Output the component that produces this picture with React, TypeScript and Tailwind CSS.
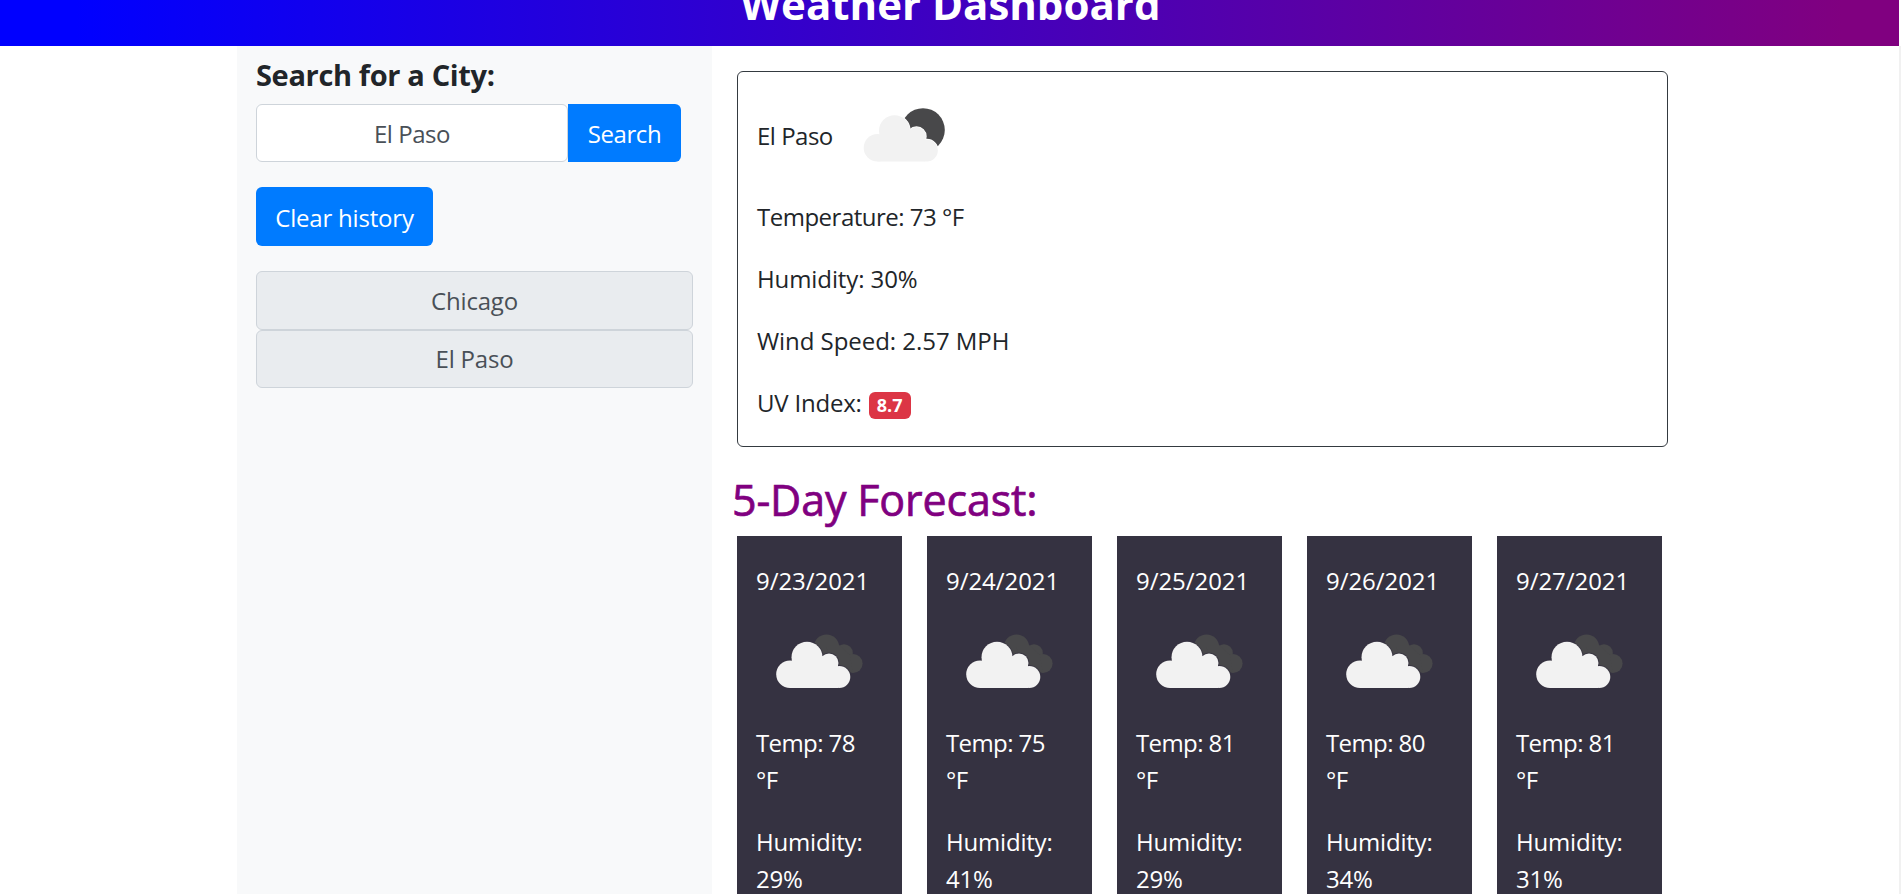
const history = ["Chicago", "El Paso"];

const forecast = [
  { date: "9/23/2021", temp: 78, humidity: 29 },
  { date: "9/24/2021", temp: 75, humidity: 41 },
  { date: "9/25/2021", temp: 81, humidity: 29 },
  { date: "9/26/2021", temp: 80, humidity: 34 },
  { date: "9/27/2021", temp: 81, humidity: 31 },
];

function CloudShape() {
  return (
    <>
      <circle cx="14" cy="32.7" r="13.8" />
      <circle cx="31" cy="15.8" r="15.5" />
      <circle cx="53" cy="21.5" r="9.5" />
      <circle cx="63.3" cy="35.5" r="11" />
      <path d="M14 46.5V30L20 14H45L62 24V46.5Z" />
    </>
  );
}

function NightCloud() {
  return (
    <svg className="ml-[31px] block h-[55px] w-[83px] shrink-0" viewBox="0 0 83 55">
      <circle cx="60" cy="22" r="21.8" fill="#48484a" />
      <g transform="translate(0.5 7)">
        <g fill="#fff" stroke="#fff" strokeWidth="1.4">
          <CloudShape />
        </g>
        <g fill="#f2f2f2">
          <CloudShape />
        </g>
      </g>
    </svg>
  );
}

function BrokenClouds() {
  return (
    <svg className="ml-5 block h-[56px] w-[87px] overflow-visible" viewBox="0 0 87 56">
      <g fill="#48484a">
        <circle cx="50.5" cy="14" r="12.6" />
        <circle cx="68" cy="20" r="8.8" />
        <circle cx="77" cy="30.5" r="9.6" />
        <path d="M50 14L62 11L74 22L77 40L56 30Z" />
      </g>
      <g transform="translate(0 8.5)">
        <g stroke="#343140" strokeOpacity="0.7" strokeWidth="2">
          <CloudShape />
        </g>
        <g fill="#f2f2f2">
          <CloudShape />
        </g>
      </g>
    </svg>
  );
}

export default function App() {
  return (
    <div className="flex h-[894px] flex-col overflow-hidden bg-white font-['Open_Sans','Noto_Sans',sans-serif] text-[24px] leading-[37px] tracking-[-0.2px] text-[#212529]">
      <header className="mr-[2px] flex h-[46px] shrink-0 items-end justify-center overflow-hidden bg-[linear-gradient(90deg,#0000ff_4%,#800080_97%)] pb-[14px]">
        <h1 className="mr-[-2px] text-[42px] leading-[56px] font-bold tracking-[0px] whitespace-nowrap text-white">Weather Dashboard</h1>
      </header>

      <div className="flex min-h-0 flex-1">
        <aside className="ml-[237px] w-[475px] shrink-0 bg-[#f8f9fa] pt-[9px] pr-[19px] pl-[19px]">
          <h2 className="text-[29px] leading-[40px] font-bold tracking-[-0.35px]">Search for a City:</h2>
          <div className="mt-[9px] flex h-[58px] w-[425px]">
            <div className="flex w-[312px] items-center justify-center rounded-[6px] border border-[#ced4da] bg-white tracking-[-0.45px] text-[#495057]">El Paso</div>
            <button className="flex-1 rounded-r-[6px] bg-[#007bff] tracking-[-0.4px] text-white">Search</button>
          </div>
          <button className="mt-[25px] block h-[59px] w-[177px] rounded-[6px] bg-[#007bff] pt-[2px] whitespace-nowrap text-white">Clear history</button>
          <div className="mt-[25px] flex flex-col">
            {history.map((city) => (
              <div key={city} className="flex h-[58.5px] items-center justify-center rounded-[6px] border border-[#ced4da] bg-[#e9ecef] text-[#495057]">
                {city}
              </div>
            ))}
          </div>
        </aside>

        <main className="flex-1 pl-[25px]">
          <section className="mt-[25px] h-[376px] w-[931px] rounded-[6px] border border-[#343a40] px-[19px]">
            <div className="flex h-[126px] items-center">
              <span className="w-[75px] tracking-[-0.5px] whitespace-nowrap">El Paso</span>
              <NightCloud />
            </div>
            <p className="tracking-[-0.5px]">Temperature: 73 °F</p>
            <p className="mt-[25px] tracking-[-0.1px]">Humidity: 30%</p>
            <p className="mt-[25px] tracking-[-0.05px]">Wind Speed: 2.57 MPH</p>
            <p className="mt-[25px] flex">
              UV Index:
              <span className="mt-[8px] ml-[7px] flex h-[27px] w-[42px] items-center justify-center rounded-[6px] bg-[#dc3545] text-[18px] font-bold tracking-[0.1px] text-white">8.7</span>
            </p>
          </section>

          <h2 className="mt-[25px] ml-[-5px] text-[43px] leading-[56px] font-medium tracking-[-0.15px] text-[#800080] [-webkit-text-stroke:0.7px_#800080]">5-Day Forecast:</h2>

          <div className="mt-[8px] flex h-[500px] gap-[25px]">
            {forecast.map((day) => (
              <article key={day.date} className="w-[165px] shrink-0 bg-[#353241] pt-[26px] pl-[19px] text-white">
                <p className="tracking-[-0.05px]">{day.date}</p>
                <div className="mt-[34px]">
                  <BrokenClouds />
                </div>
                <p className="mt-[35px] tracking-[-0.6px]">
                  Temp: {day.temp}
                  <br />
                  °F
                </p>
                <p className="mt-[25px]">
                  Humidity:
                  <br />
                  {day.humidity}%
                </p>
              </article>
            ))}
          </div>
        </main>
        <div className="w-[2px] bg-[#f1f1f1]" />
      </div>
    </div>
  );
}
